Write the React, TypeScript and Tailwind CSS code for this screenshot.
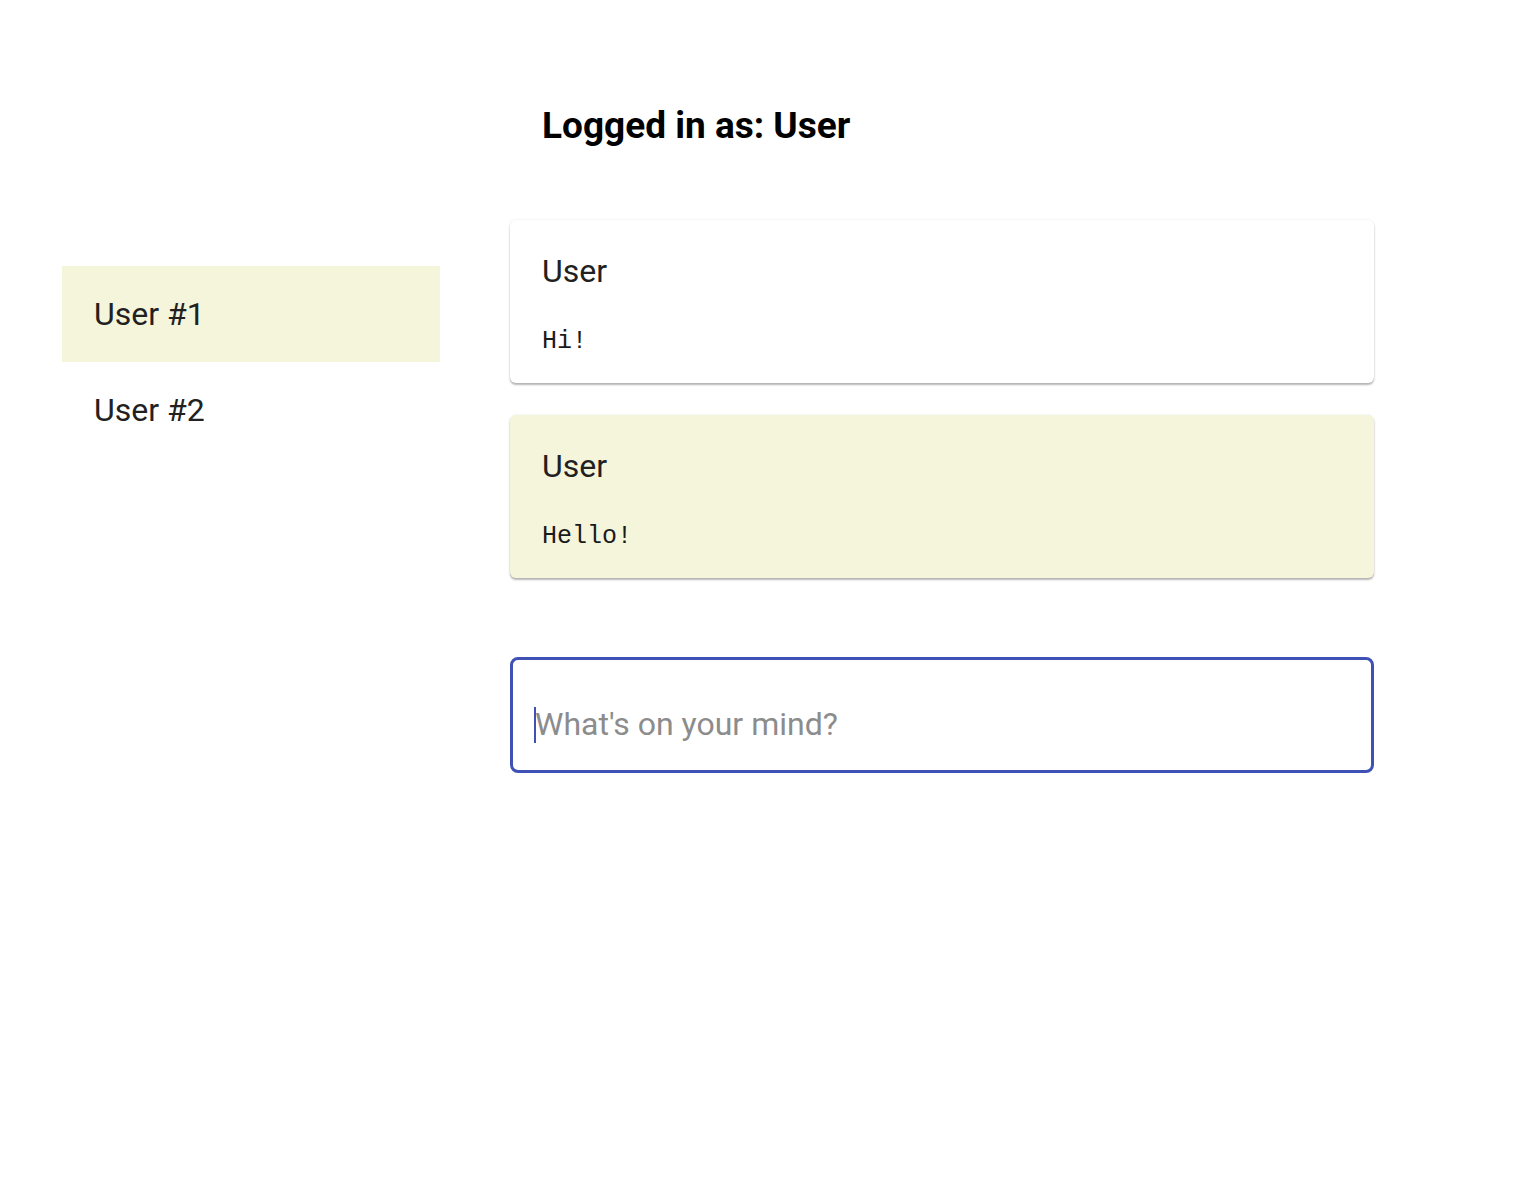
import React from 'react';

const users = ['User #1', 'User #2'];

const messages = [
  { author: 'User', text: 'Hi!', mine: false },
  { author: 'User', text: 'Hello!', mine: true },
];

export default function App() {
  return (
    <div
      className="min-h-[1196px] w-full bg-white text-[#212121]"
      style={{ fontFamily: 'Roboto, "Noto Sans", sans-serif' }}
    >
      <div className="flex pl-[62px]">
        {/* user list */}
        <div className="w-[378px] pt-[266px]">
          {users.map((u, i) => (
            <div
              key={u}
              className={`flex h-[96px] items-center px-[32px] text-[32px] leading-none ${
                i === 0 ? 'bg-[#f5f5dc]' : ''
              }`}
            >
              {u}
            </div>
          ))}
        </div>

        {/* chat */}
        <div className="ml-[70px] w-[864px]">
          <h1 className="px-[32px] pt-[104px] text-[37px] font-bold leading-[1.2] text-black">
            Logged in as: User
          </h1>

          <div className="mt-[72px] flex flex-col gap-[32px]">
            {messages.map((m, i) => (
              <div
                key={i}
                className={`h-[163px] rounded-[6px] px-[32px] pt-[32px] shadow-[0_2px_2px_rgba(0,0,0,0.28),0_0_3px_rgba(0,0,0,0.08)] ${
                  m.mine ? 'bg-[#f5f5dc]' : 'bg-white'
                }`}
              >
                <div className="text-[32px] leading-[1.2]">{m.author}</div>
                <div
                  className="mt-[36px] text-[25px] leading-[1.2] text-[#1a1a1a]"
                  style={{ fontFamily: '"Liberation Mono", "Courier New", monospace' }}
                >
                  {m.text}
                </div>
              </div>
            ))}
          </div>

          <div className="relative mt-[79px]">
            <input
              type="text"
              placeholder="What's on your mind?"
              className="h-[116px] w-full rounded-[8px] border-[3px] border-[#3f51b5] bg-white pl-[22px] pt-[18px] text-[32px] text-[#212121] outline-none placeholder:text-[#8c8c8c]"
            />
            <span className="absolute left-[24px] top-[50px] h-[36px] w-[2px] bg-[#3f51b5]" />
          </div>
        </div>
      </div>
    </div>
  );
}
